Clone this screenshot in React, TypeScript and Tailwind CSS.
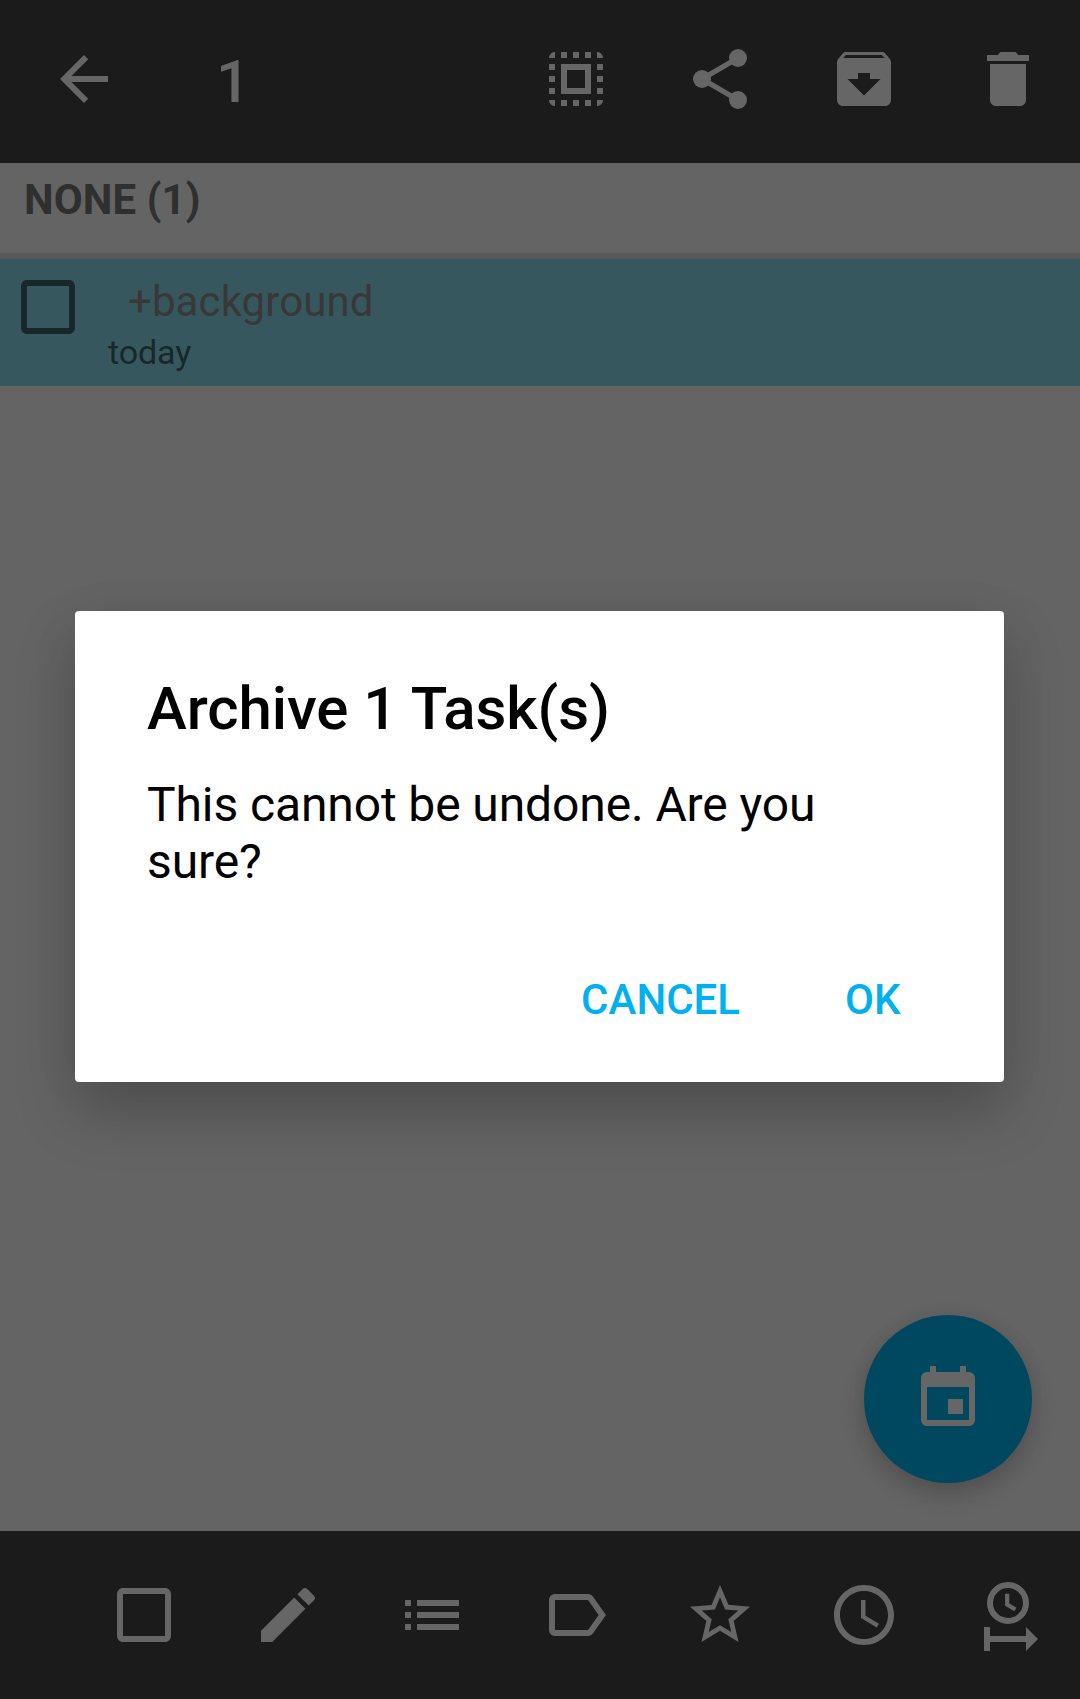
import type { ReactNode } from "react";

function Icon({ children }: { children: ReactNode }) {
  return (
    <svg viewBox="0 0 24 24" className="block size-[72px] shrink-0" fill="currentColor">
      {children}
    </svg>
  );
}

function BackIcon() {
  return (
    <Icon>
      <path d="M20 11H7.83l5.59-5.59L12 4l-8 8 8 8 1.41-1.41L7.83 13H20v-2z" />
    </Icon>
  );
}

function SelectAllIcon() {
  return (
    <Icon>
      <path d="M3 5h2V3c-1.1 0-2 .9-2 2zm0 8h2v-2H3v2zm4 8h2v-2H7v2zM3 9h2V7H3v2zm10-6h-2v2h2V3zm6 0v2h2c0-1.1-.9-2-2-2zM5 21v-2H3c0 1.1.9 2 2 2zm-2-4h2v-2H3v2zM9 3H7v2h2V3zm2 18h2v-2h-2v2zm8-8h2v-2h-2v2zm0 8c1.1 0 2-.9 2-2h-2v2zm0-12h2V7h-2v2zm0 8h2v-2h-2v2zm-4 4h2v-2h-2v2zm0-16h2V3h-2v2zM7 17h10V7H7v10zm2-8h6v6H9V9z" />
    </Icon>
  );
}

function ShareIcon() {
  return (
    <Icon>
      <path d="M18 5L6 12l12 7" fill="none" stroke="currentColor" strokeWidth="1.75" />
      <circle cx="18" cy="5" r="3" />
      <circle cx="6" cy="12" r="3" />
      <circle cx="18" cy="19" r="3" />
    </Icon>
  );
}

function ArchiveIcon() {
  return (
    <Icon>
      <path d="M20.54 5.23l-1.39-1.68C18.88 3.21 18.47 3 18 3H6c-.47 0-.88.21-1.16.55L3.46 5.23C3.17 5.57 3 6.02 3 6.5V19c0 1.1.9 2 2 2h14c1.1 0 2-.9 2-2V6.5c0-.48-.17-.93-.46-1.27zM12 17.5L6.5 12H10v-2h4v2h3.5L12 17.5zM5.12 5l.81-1h12l.94 1H5.12z" />
    </Icon>
  );
}

function DeleteIcon() {
  return (
    <Icon>
      <path d="M6 19c0 1.1.9 2 2 2h8c1.1 0 2-.9 2-2V7H6v12zM19 4h-3.5l-1-1h-5l-1 1H5v2h14V4z" />
    </Icon>
  );
}

function BoxIcon() {
  return (
    <Icon>
      <path d="M19 5v14H5V5h14m0-2H5c-1.1 0-2 .9-2 2v14c0 1.1.9 2 2 2h14c1.1 0 2-.9 2-2V5c0-1.1-.9-2-2-2z" />
    </Icon>
  );
}

function EditIcon() {
  return (
    <Icon>
      <path d="M3 17.25V21h3.75L17.81 9.94l-3.75-3.75L3 17.25zM20.71 7.04c.39-.39.39-1.02 0-1.41l-2.34-2.34c-.39-.39-1.02-.39-1.41 0l-1.83 1.83 3.75 3.75 1.83-1.83z" />
    </Icon>
  );
}

function ListIcon() {
  return (
    <Icon>
      <path d="M3 13h2v-2H3v2zm0 4h2v-2H3v2zm0-8h2V7H3v2zm4 4h14v-2H7v2zm0 4h14v-2H7v2zM7 7v2h14V7H7z" />
    </Icon>
  );
}

function LabelIcon() {
  return (
    <Icon>
      <path d="M17.63 5.84C17.27 5.33 16.67 5 16 5L5 5.01C3.9 5.01 3 5.9 3 7v10c0 1.1.9 1.99 2 1.99L16 19c.67 0 1.27-.33 1.63-.84L22 12l-4.37-6.16zM16 17H5V7h11l3.55 5L16 17z" />
    </Icon>
  );
}

function StarIcon() {
  return (
    <Icon>
      <path d="M22 9.24l-7.19-.62L12 2 9.19 8.63 2 9.24l5.46 4.73L5.82 21 12 17.27 18.18 21l-1.63-7.03L22 9.24zM12 15.4l-3.76 2.27 1-4.28-3.32-2.88 4.38-.38L12 6.1l1.71 4.04 4.38.38-3.32 2.88 1 4.28L12 15.4z" />
    </Icon>
  );
}

function ClockIcon() {
  return (
    <Icon>
      <path d="M11.99 2C6.47 2 2 6.48 2 12s4.47 10 9.99 10C17.52 22 22 17.52 22 12S17.52 2 11.99 2zM12 20c-4.42 0-8-3.58-8-8s3.58-8 8-8 8 3.58 8 8-3.58 8-8 8zM12.5 7H11v6l5.25 3.15.75-1.23-4.5-2.67V7z" />
    </Icon>
  );
}

function ThresholdIcon() {
  return (
    <Icon>
      <circle cx="12" cy="8" r="6" fill="none" stroke="currentColor" strokeWidth="2" />
      <path d="M11.72 4.9v3.6l2.75 1.65" fill="none" stroke="currentColor" strokeWidth="1.4" />
      <path d="M4 16h2v3h12v-3l4 4-4 4v-3H6v3H4z" />
    </Icon>
  );
}

function EventIcon() {
  return (
    <Icon>
      <path d="M17 12h-5v5h5v-5zM16 1v2H8V1H6v2H5c-1.11 0-1.99.9-1.99 2L3 19c0 1.1.89 2 2 2h14c1.1 0 2-.9 2-2V5c0-1.1-.9-2-2-2h-1V1h-2zm3 18H5V8h14v11z" />
    </Icon>
  );
}

export default function App() {
  return (
    <div className="relative flex h-[1699px] w-[1080px] flex-col overflow-hidden bg-[#646464] font-['Roboto',sans-serif]">
      <header className="flex h-[163px] shrink-0 items-start bg-[#1b1b1b] pr-9 pl-12 text-[#666666]">
        <div className="pt-[43px]">
          <BackIcon />
        </div>
        <span className="ml-24 text-[60px] leading-[163px] font-medium">1</span>
        <div className="ml-auto flex gap-[72px] pt-[43px]">
          <SelectAllIcon />
          <ShareIcon />
          <ArchiveIcon />
          <DeleteIcon />
        </div>
      </header>

      <main className="flex grow flex-col">
        <h2 className="h-24 border-b-6 border-[#595959] pl-6 text-[42px] leading-[73px] font-bold tracking-[0.1px] text-[#2f2f2f]">
          NONE (1)
        </h2>
        <div className="flex h-[127px] bg-[#37575f] pt-3 pl-3 text-[#17272c]">
          <BoxIcon />
          <div className="ml-6 pt-[7px]">
            <p className="pl-5 text-[42px] leading-[48px] tracking-[0.1px] text-[#393838]">+background</p>
            <p className="text-[34px] leading-[52px] tracking-[-0.1px]">today</p>
          </div>
        </div>
        <button className="mt-auto mr-12 mb-12 flex size-[168px] items-center justify-center self-end rounded-full bg-[#00485f] text-[#666666] shadow-[0_12px_24px_rgba(0,0,0,0.16),0_2px_20px_rgba(0,0,0,0.08)]">
          <EventIcon />
        </button>
      </main>

      <footer className="flex h-[168px] shrink-0 items-center justify-between bg-[#1b1b1b] pr-9 pl-[108px] text-[#666666]">
        <BoxIcon />
        <EditIcon />
        <ListIcon />
        <LabelIcon />
        <StarIcon />
        <ClockIcon />
        <ThresholdIcon />
      </footer>

      <div
        role="dialog"
        className="absolute top-[611px] left-[75px] h-[471px] w-[929px] rounded-[4px] bg-white px-[72px] pt-[63px] text-black shadow-[0_30px_60px_rgba(0,0,0,0.21),0_4px_60px_rgba(0,0,0,0.04)]"
      >
        <h1 className="text-[60px] leading-[70px] font-medium tracking-[-0.08px]">Archive 1 Task(s)</h1>
        <p className="mt-8 text-[48px] leading-[57px] tracking-[-0.11px]">
          This cannot be undone. Are you sure?
        </p>
        <div className="mt-14 flex justify-end gap-[105px] pr-[31.5px] text-[42px] leading-[108px] font-medium text-[#00b0ef]">
          <button>CANCEL</button>
          <button>OK</button>
        </div>
      </div>
    </div>
  );
}
